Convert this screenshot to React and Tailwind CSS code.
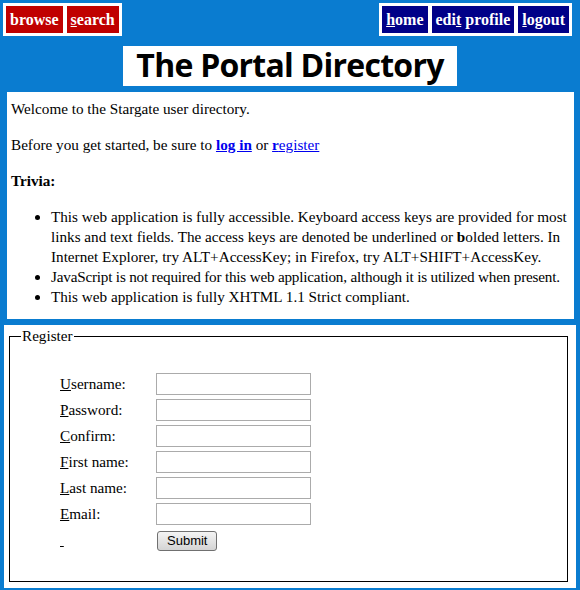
import React from 'react';

const serif = "font-['Liberation_Serif','Times_New_Roman',serif]";

const leftTabs = [
    { key: 'browse', label: <>browse</> },
    { key: 'search', label: <><span className="underline">s</span>earch</> },
];

const rightTabs = [
    { key: 'home', label: <><span className="underline">h</span>ome</> },
    { key: 'edit', label: <>edi<span className="underline">t</span> profile</> },
    { key: 'logout', label: <><span className="underline">l</span>ogout</> },
];

const fields = [
    { key: 'U', rest: 'sername:', type: 'text' },
    { key: 'P', rest: 'assword:', type: 'password' },
    { key: 'C', rest: 'onfirm:', type: 'password' },
    { key: 'F', rest: 'irst name:', type: 'text' },
    { key: 'L', rest: 'ast name:', type: 'text' },
    { key: 'E', rest: 'mail:', type: 'text' },
];

const Tabs = ({ items, color }) => (
    <div className="flex gap-[4px] bg-white p-[3px]">
        {items.map((t) => (
            <a key={t.key} href="#" className={`${color} flex h-[27px] items-center px-[4px] text-[16px] font-bold text-white no-underline`}>
                <span>{t.label}</span>
            </a>
        ))}
    </div>
);

export default function App() {
    return (
        <div className={`${serif} min-h-[590px] bg-[#0a7cd0] pb-[3px] text-[15.2px] leading-[20px] text-black`}>
            {/* Top navigation */}
            <div className="flex justify-between pl-[3px] pr-[8px] pt-[3px]">
                <Tabs items={leftTabs} color="bg-[#c00000]" />
                <Tabs items={rightTabs} color="bg-[#000088]" />
            </div>

            {/* Title */}
            <div className="mx-auto mt-[10px] flex h-[40px] w-[334px] items-center justify-center bg-white">
                <h1 className="mb-[3px] font-['Open_Sans',sans-serif] text-[32px] font-bold leading-none tracking-[-0.75px]">
                    The Portal Directory
                </h1>
            </div>

            {/* Intro */}
            <div className="ml-[7px] mr-[6px] mt-[6px] bg-white pb-[12px] pl-[4px] pt-[7px]">
                <p>Welcome to the Stargate user directory.</p>
                <p className="mt-[16px]">
                    Before you get started, be sure to{' '}
                    <a href="#" className="font-bold text-[#0000ee] underline">log in</a> or{' '}
                    <a href="#" className="text-[#0000ee] underline"><b>r</b>egister</a>
                </p>
                <p className="mt-[16px] font-bold">Trivia:</p>
                <ul className="mt-[16px] list-disc pl-[40px]">
                    <li>
                        This web application is fully accessible. Keyboard access keys are provided for most links and
                        text fields. The access keys are denoted be underlined or <b>b</b>olded letters. In Internet
                        Explorer, try ALT+AccessKey; in Firefox, try ALT+SHIFT+AccessKey.
                    </li>
                    <li className="tracking-[-0.2px]">
                        JavaScript is not required for this web application, although it is utilized when present.
                    </li>
                    <li>This web application is fully XHTML 1.1 Strict compliant.</li>
                </ul>
            </div>

            {/* Register form */}
            <div className="ml-[4px] mr-[4px] mt-[6px] bg-white pb-[6px] pt-[1px]">
                <fieldset className="ml-[5px] mr-[8px] border border-black pb-[30px] pl-[11px]">
                    <legend className="px-[1px]">Register</legend>
                    <div className="ml-[39px] mt-[27px] grid grid-cols-[96px_auto] gap-y-[4px]">
                        {fields.map((f) => (
                            <React.Fragment key={f.key}>
                                <label className="flex items-center">
                                    <span className="underline">{f.key}</span>
                                    {f.rest}
                                </label>
                                <input type={f.type} className="h-[22px] w-[155px] border border-[#ababab] bg-white" />
                            </React.Fragment>
                        ))}
                        <span className="mt-[1px] flex items-center underline">&nbsp;</span>
                        <div className="mt-[1px] pl-[1px]">
                            <button className="h-[20px] rounded-[3px] border border-[#707070] bg-gradient-to-b from-[#f4f4f4] to-[#d4d4d4] px-[9px] font-['Liberation_Sans',Arial,sans-serif] text-[13px] leading-none text-black">
                                Submit
                            </button>
                        </div>
                    </div>
                </fieldset>
            </div>
        </div>
    );
}
